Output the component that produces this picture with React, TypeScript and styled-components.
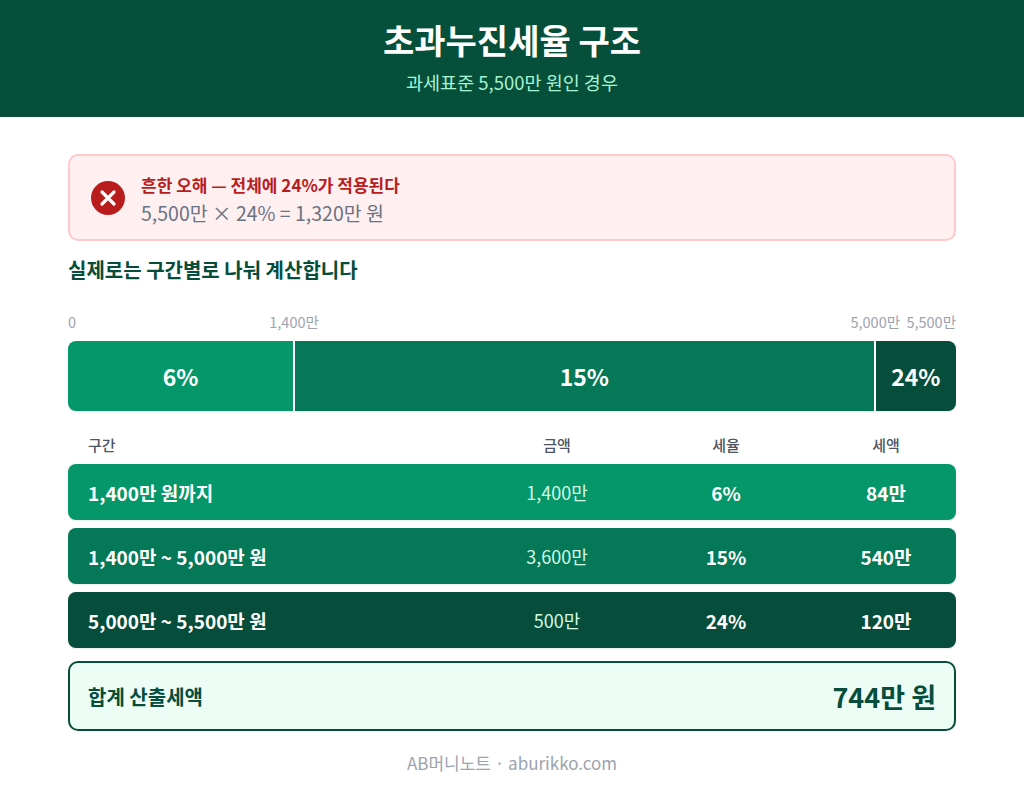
import React from 'react';
import styled, { createGlobalStyle } from 'styled-components';

const GlobalStyle = createGlobalStyle`
  html, body {
    margin: 0;
    padding: 0;
    background: #ffffff;
    font-family: 'Noto Sans CJK KR', 'Noto Sans', sans-serif;
  }
`;

interface Bracket {
  label: string;
  amount: string;
  rate: string;
  tax: string;
  base: number;
  color: string;
}

const TOTAL = 5500;

const brackets: Bracket[] = [
  { label: '1,400만 원까지', amount: '1,400만', rate: '6%', tax: '84만', base: 1400, color: '#059669' },
  { label: '1,400만 ~ 5,000만 원', amount: '3,600만', rate: '15%', tax: '540만', base: 3600, color: '#047857' },
  { label: '5,000만 ~ 5,500만 원', amount: '500만', rate: '24%', tax: '120만', base: 500, color: '#064e3b' },
];

const App: React.FC = () => {
  return (
    <Page>
      <GlobalStyle />
      <Header>
        <Title>초과누진세율 구조</Title>
        <Subtitle>과세표준 5,500만 원인 경우</Subtitle>
      </Header>

      <Content>
        <Warning>
          <WarningIcon viewBox="0 0 36 36">
            <circle cx="18" cy="18" r="17" fill="#b91c1c" />
            <path d="M12 12 L24 24 M24 12 L12 24" stroke="#fff" strokeWidth="3.2" strokeLinecap="round" />
          </WarningIcon>
          <WarningText>
            <WarningTitle>흔한 오해 — 전체에 24%가 적용된다</WarningTitle>
            <WarningFormula>5,500만 × 24% = 1,320만 원</WarningFormula>
          </WarningText>
        </Warning>

        <SectionTitle>실제로는 구간별로 나눠 계산합니다</SectionTitle>

        <Scale>
          <ScaleLabel style={{ left: '0%' }} $align="start">0</ScaleLabel>
          <ScaleLabel style={{ left: `${(1400 / TOTAL) * 100}%` }} $align="center">1,400만</ScaleLabel>
          <ScaleLabel style={{ left: `${(5000 / TOTAL) * 100}%` }} $align="center">5,000만</ScaleLabel>
          <ScaleLabel style={{ left: '100%' }} $align="end">5,500만</ScaleLabel>
        </Scale>

        <Bar>
          {brackets.map((b) => (
            <Segment key={b.rate} $color={b.color} style={{ flexGrow: b.base }}>
              {b.rate}
            </Segment>
          ))}
        </Bar>

        <TableHead>
          <HeadCell>구간</HeadCell>
          <HeadCell $center>금액</HeadCell>
          <HeadCell $center>세율</HeadCell>
          <HeadCell $center>세액</HeadCell>
        </TableHead>

        <Rows>
          {brackets.map((b) => (
            <Row key={b.label} $color={b.color}>
              <RowLabel>{b.label}</RowLabel>
              <RowAmount>{b.amount}</RowAmount>
              <RowStrong>{b.rate}</RowStrong>
              <RowStrong>{b.tax}</RowStrong>
            </Row>
          ))}
        </Rows>

        <Total>
          <TotalLabel>합계 산출세액</TotalLabel>
          <TotalValue>744만 원</TotalValue>
        </Total>

        <Footer>AB머니노트 · aburikko.com</Footer>
      </Content>
    </Page>
  );
};

const Page = styled.div`
  width: 1024px;
  min-height: 796px;
  display: flex;
  flex-direction: column;
`;

const Header = styled.header`
  height: 117px;
  background: #054f3b;
  display: flex;
  flex-direction: column;
  align-items: center;
  gap: 7px;
  padding-top: 18px;
  box-sizing: border-box;
`;

const Title = styled.h1`
  margin: 0;
  font-size: 34px;
  font-weight: 700;
  color: #ffffff;
  line-height: 44px;
`;

const Subtitle = styled.p`
  margin: 0;
  font-size: 18.5px;
  color: #a7f3d0;
  line-height: 26px;
`;

const Content = styled.main`
  padding: 37px 68px 0;
  display: flex;
  flex-direction: column;
`;

const Warning = styled.div`
  height: 87px;
  box-sizing: border-box;
  background: #fef0f0;
  border: 2px solid #fecaca;
  border-radius: 10px;
  display: flex;
  align-items: center;
  gap: 15px;
  padding: 0 20px;
`;

const WarningIcon = styled.svg`
  width: 36px;
  height: 36px;
  flex-shrink: 0;
`;

const WarningText = styled.div`
  display: flex;
  flex-direction: column;
  gap: 2px;
  padding-top: 5px;
`;

const WarningTitle = styled.div`
  font-size: 17px;
  font-weight: 700;
  color: #b91c1c;
  line-height: 24px;
`;

const WarningFormula = styled.div`
  font-size: 19.5px;
  color: #6b7280;
  line-height: 28px;
`;

const SectionTitle = styled.h2`
  margin: 15px 0 0;
  font-size: 20px;
  font-weight: 700;
  color: #064e3b;
  line-height: 28px;
`;

const Scale = styled.div`
  position: relative;
  height: 18px;
  margin-top: 29px;
`;

const ScaleLabel = styled.span<{ $align: 'start' | 'center' | 'end' }>`
  position: absolute;
  top: 0;
  font-size: 14.5px;
  color: #9ca3af;
  line-height: 18px;
  white-space: nowrap;
  transform: ${(p) => (p.$align === 'start' ? 'none' : p.$align === 'center' ? 'translateX(-50%)' : 'translateX(-100%)')};
`;

const Bar = styled.div`
  margin-top: 10px;
  height: 70px;
  display: flex;
  border-radius: 8px;
  overflow: hidden;
  gap: 2px;
  background: #ffffff;
  box-shadow: 0 1px 2px rgba(0, 0, 0, 0.08);
`;

const Segment = styled.div<{ $color: string }>`
  flex-basis: 0;
  background: ${(p) => p.$color};
  color: #ffffff;
  font-size: 23px;
  font-weight: 700;
  display: flex;
  align-items: center;
  justify-content: center;
`;

const grid = `
  display: grid;
  grid-template-columns: 1fr 158px 180px 140px;
  align-items: center;
  padding-left: 20px;
`;

const TableHead = styled.div`
  ${grid}
  margin-top: 22px;
  height: 22px;
`;

const HeadCell = styled.div<{ $center?: boolean }>`
  font-size: 15px;
  font-weight: 500;
  color: #4b5563;
  text-align: ${(p) => (p.$center ? 'center' : 'left')};
`;

const Rows = styled.div`
  margin-top: 9px;
  display: flex;
  flex-direction: column;
  gap: 8px;
`;

const Row = styled.div<{ $color: string }>`
  ${grid}
  height: 56px;
  border-radius: 8px;
  background: ${(p) => p.$color};
  color: #ffffff;
  box-shadow: 0 1px 2px rgba(0, 0, 0, 0.08);
`;

const RowLabel = styled.div`
  font-size: 19px;
  font-weight: 700;
`;

const RowAmount = styled.div`
  font-size: 18px;
  text-align: center;
  color: #d1fae5;
`;

const RowStrong = styled.div`
  font-size: 19px;
  font-weight: 700;
  text-align: center;
`;

const Total = styled.div`
  margin-top: 13px;
  height: 70px;
  box-sizing: border-box;
  background: #ecfdf5;
  border: 2px solid #064e3b;
  border-radius: 10px;
  display: flex;
  align-items: center;
  justify-content: space-between;
  padding: 0 18px;
`;

const TotalLabel = styled.div`
  font-size: 20px;
  font-weight: 700;
  color: #064e3b;
`;

const TotalValue = styled.div`
  font-size: 27px;
  font-weight: 700;
  color: #064e3b;
`;

const Footer = styled.footer`
  margin-top: 21px;
  text-align: center;
  font-size: 17px;
  color: #9ca3af;
  line-height: 22px;
`;

export default App;
